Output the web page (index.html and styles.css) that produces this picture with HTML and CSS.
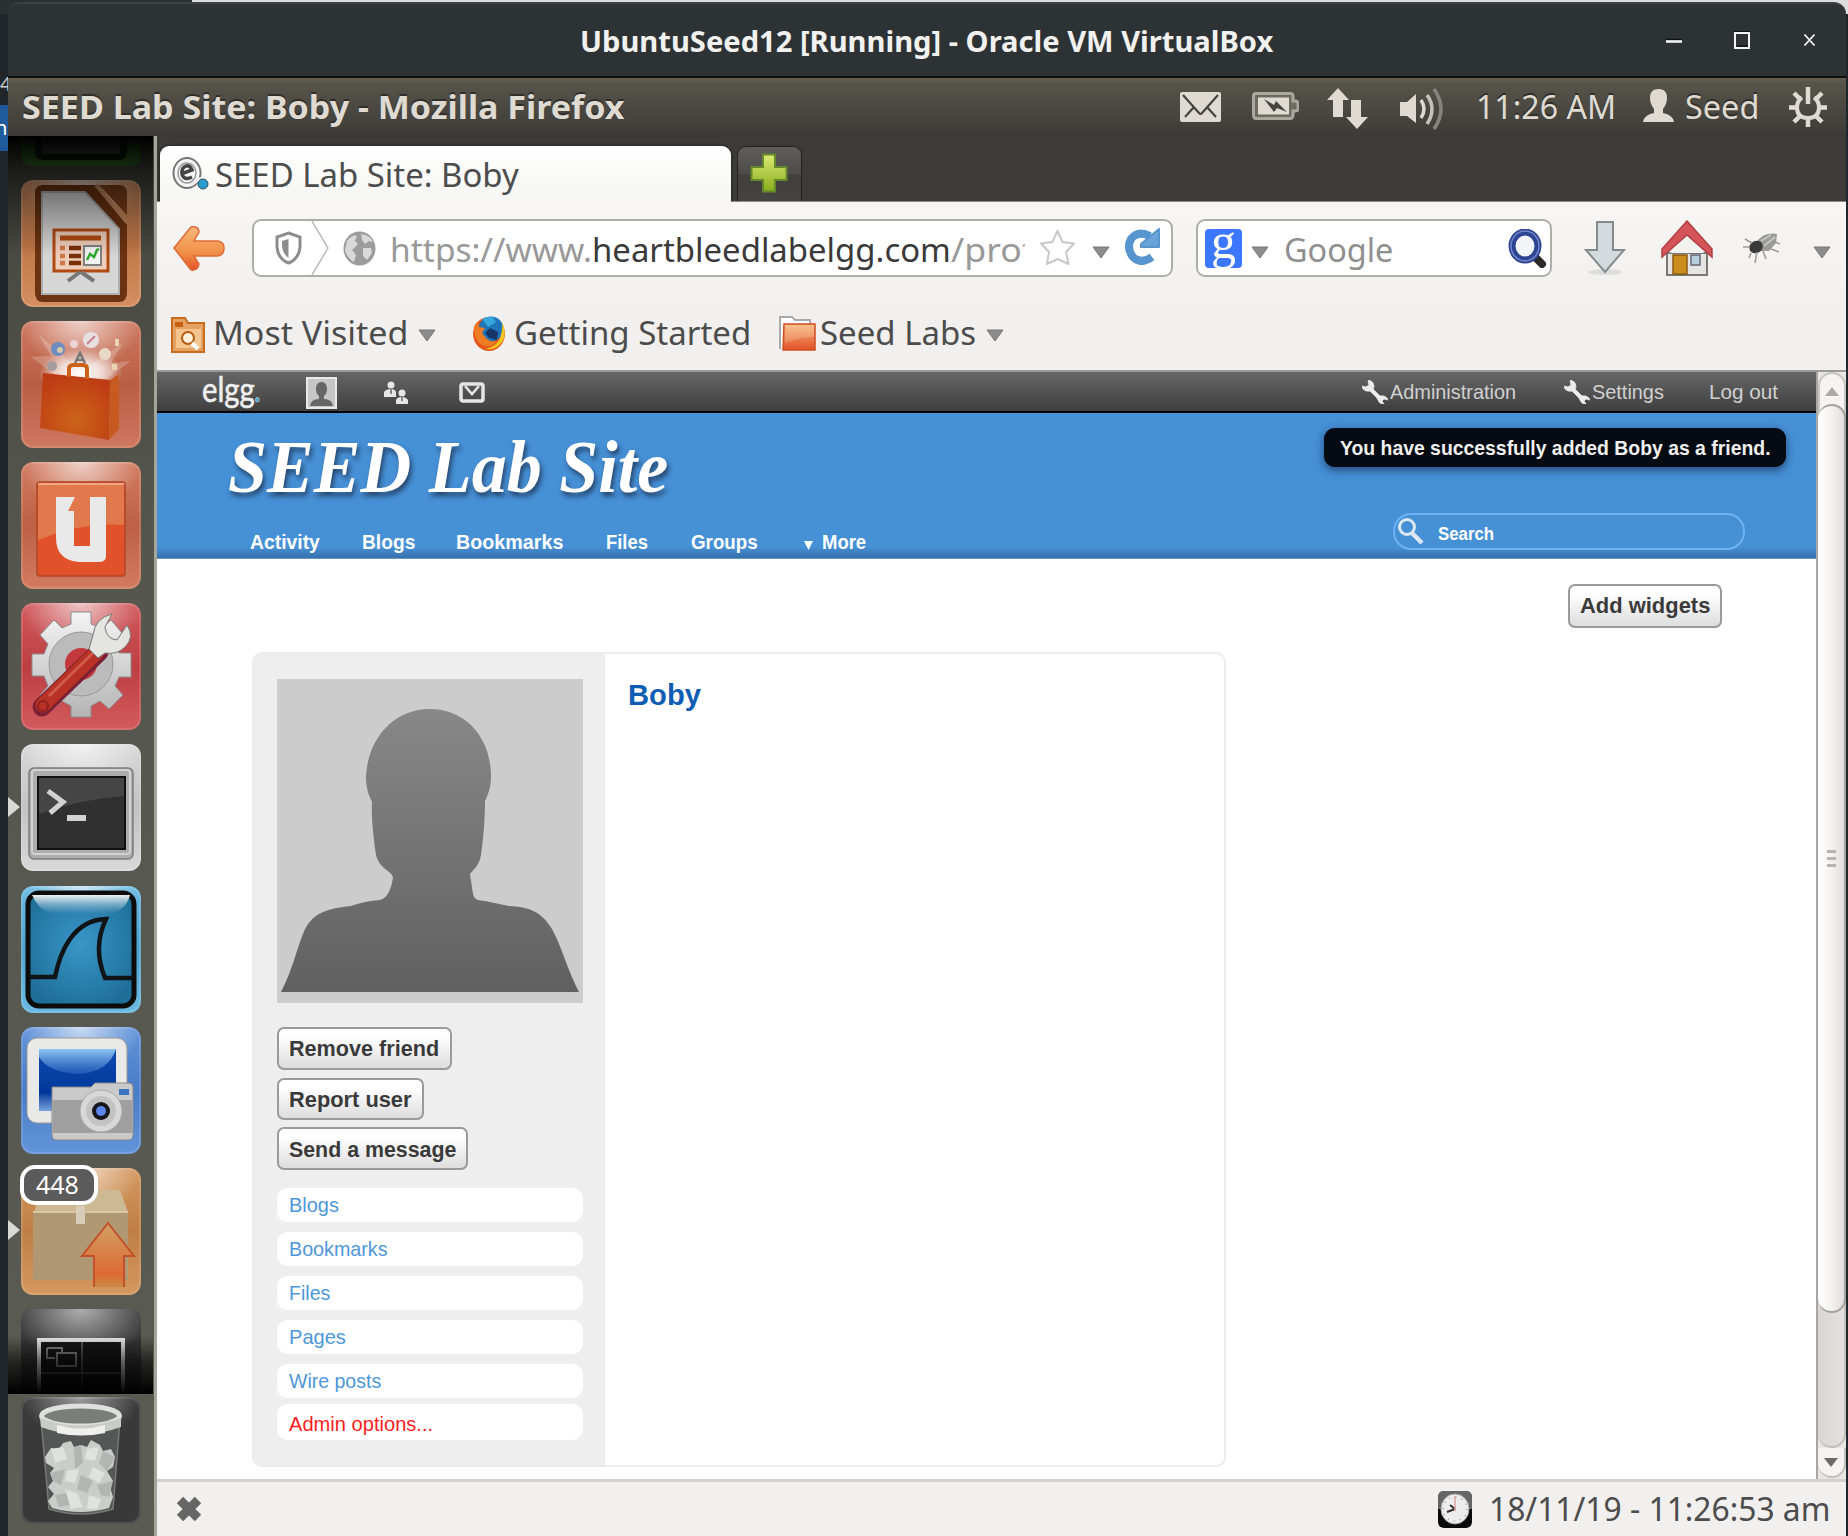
FILE: index.html
```html
<!DOCTYPE html>
<html lang="en">
<head>
<meta charset="utf-8">
<title>UbuntuSeed12 [Running] - Oracle VM VirtualBox</title>
<link rel="stylesheet" href="styles.css">
</head>
<body>
<svg class="defs" width="0" height="0" aria-hidden="true">
  <defs>
    <linearGradient id="gOrange" x1="0" y1="0" x2="0" y2="1"><stop offset="0" stop-color="#f6b573"/><stop offset="1" stop-color="#e2522a"/></linearGradient>
    <linearGradient id="gArrow" x1="0" y1="0" x2="0" y2="1"><stop offset="0" stop-color="#f9b878"/><stop offset=".6" stop-color="#f09048"/><stop offset="1" stop-color="#e2522a"/></linearGradient>
    <linearGradient id="gUp" x1="0" y1="0" x2="0" y2="1"><stop offset="0" stop-color="#cfa062"/><stop offset=".8" stop-color="#de6a34"/><stop offset="1" stop-color="#c98a44"/></linearGradient>
    <radialGradient id="gShine" cx=".5" cy="0" r=".6"><stop offset="0" stop-color="#fff" stop-opacity=".6"/><stop offset="1" stop-color="#fff" stop-opacity="0"/></radialGradient>
    <radialGradient id="gBurst"><stop offset="0" stop-color="#fff"/><stop offset=".5" stop-color="#fff" stop-opacity=".7"/><stop offset="1" stop-color="#fff" stop-opacity="0"/></radialGradient>
    <radialGradient id="gBag" cx=".5" cy=".7" r=".7"><stop offset="0" stop-color="#cc6418"/><stop offset="1" stop-color="#bd3b14"/></radialGradient>
    <radialGradient id="gSea" cx=".5" cy=".45" r=".6"><stop offset="0" stop-color="#3a96c8"/><stop offset="1" stop-color="#1e6f98"/></radialGradient>
    <linearGradient id="gGlass" x1="0" y1="0" x2="0" y2="1"><stop offset="0" stop-color="#f2f2f2"/><stop offset="1" stop-color="#9cc8de" stop-opacity="0"/></linearGradient>
    <linearGradient id="gBody" x1="0" y1="0" x2="0" y2="1"><stop offset="0" stop-color="#888"/><stop offset="1" stop-color="#606060"/></linearGradient>
    <linearGradient id="gSteel" x1="0" y1="0" x2="0" y2="1"><stop offset="0" stop-color="#f4f4f4"/><stop offset="1" stop-color="#b4b4b4"/></linearGradient>
    <linearGradient id="gBlue" x1="0" y1="0" x2="0" y2="1"><stop offset="0" stop-color="#0d4bb0"/><stop offset=".7" stop-color="#02379a"/><stop offset="1" stop-color="#7aa3e0"/></linearGradient>
    <linearGradient id="gSky" x1="0" y1="0" x2="0" y2="1"><stop offset="0" stop-color="#8fc6f4"/><stop offset="1" stop-color="#2f66c0" stop-opacity=".6"/></linearGradient>
    <linearGradient id="gPlus" x1="0" y1="0" x2="0" y2="1"><stop offset="0" stop-color="#dbe973"/><stop offset="1" stop-color="#8aac1d"/></linearGradient>
  </defs>
  <symbol id="caret" viewBox="0 0 18 13"><path d="M1 1H17L9 12Z" fill="#8c8c8c" stroke="#777" stroke-width="1"/></symbol>
  <symbol id="wrench" viewBox="0 0 26 24"><path d="M7 0Q12 2 12 6Q12 8 11 9L18 16Q22 15 25 18L26 20L22 19L20 21L22 24Q17 24 16 20L15 18L8 11Q4 12 1 9L0 6L4 7L7 5L6 1Z" fill="#ececec" stroke="#ececec" stroke-width=".8"/></symbol>
  <symbol id="person" viewBox="0 0 305 323"><path d="M153 30C190 30 214 60 214 97C214 108 211 116 208 122C208 142 206 162 204 176C202 186 199 188 193 195L196 215C198 222 202 221 208 222L232 227C252 228 264 232 275 250C285 268 290 290 302 313H4C16 290 20 268 28 250C37 234 48 230 74 227Q88 222 103 221C112 219 115 206 116 198C114 192 102 189 99 176C97 162 94 140 95 123C91 115 89 108 89 97C91 60 116 30 153 30Z" fill="url(#gBody)"/></symbol>
</svg>

<div class="desktop">
  <div class="behind"><span class="behind-digit">4</span><span class="behind-sel">n</span></div>
  <main class="window">
    <header class="titlebar">
      <h1 class="fit title"><span>UbuntuSeed12 [Running] - Oracle VM VirtualBox</span></h1>
      <div class="wm">
        <svg width="16" height="18"><path d="M0 8.5H16" stroke="#111" stroke-width="1.5"/><path d="M0 10.5H16" stroke="#f4f4f4" stroke-width="2.6"/></svg>
        <svg width="16" height="18"><path d="M0 .5H16M3 15H14" stroke="#111" stroke-width="1.5"/><path d="M1 2H15V17H1Z" fill="none" stroke="#f4f4f4" stroke-width="2"/></svg>
        <svg width="14" height="18"><path d="M2.500 3.500L12.500 14.500M12.500 3.500L2.500 14.500" stroke="#f4f4f4" stroke-width="1.8"/></svg>
      </div>
    </header>

    <div class="panel">
      <strong class="fit app"><span>SEED Lab Site: Boby - Mozilla Firefox</span></strong>
      <svg class="p-mail" width="41" height="31" viewBox="0 0 41 31"><rect width="41" height="30" rx="2" fill="#dfdbd2"/><path d="M3 3L19 21Q20.500 23 22 21L38 3M5 25L14 15M36 25L27 15" fill="none" stroke="#45443e" stroke-width="2.200"/></svg>
      <svg class="p-bat" width="47" height="28" viewBox="0 0 47 28"><path d="M4 1.500H38Q41 1.500 41 4V9H43.500Q46 9 46 12V17Q46 19 43.500 19H41V23Q41 26.500 38 26.500H4Q1.500 26.500 1.500 23V4Q1.500 1.500 4 1.500Z" fill="#6d6a61" stroke="#aaa79e" stroke-width="3"/><path d="M6 5.500H37V22.500H6Z" fill="#dfdbd2"/><path d="M12 7L22 13L24 9L35 20L25 16L22 20Z" fill="#45443e"/></svg>
      <svg class="p-net" width="41" height="42" viewBox="0 0 41 42"><path d="M11 0L22 12H16V29H6V12H0ZM24 12H34V29H41L30 41L19 29H24Z" fill="#dfdbd2"/></svg>
      <svg class="p-vol" width="46" height="42" viewBox="0 0 46 42"><path d="M0 14H7L16 6V35L7 28H0Z" fill="#dfdbd2"/><path d="M21 12Q27 21 21 30" fill="none" stroke="#dfdbd2" stroke-width="3.500"/><path d="M27 7Q37 21 27 36" fill="none" stroke="#c5c2b9" stroke-width="3.500"/><path d="M34 1Q48 21 34 41" fill="none" stroke="#86847c" stroke-width="3.500"/></svg>
      <span class="fit clock"><span>11:26 AM</span></span>
      <svg class="p-user" width="31" height="34" viewBox="0 0 31 34"><path d="M15.500 0C22 0 24 4 24 9C24 14 22 17 20 20V24Q30 26 31 33H0Q1 26 11 24V20C9 17 7 14 7 9C7 4 9 0 15.500 0Z" fill="#dfdbd2"/></svg>
      <span class="fit user"><span>Seed</span></span>
      <svg class="p-gear" width="38" height="40" viewBox="0 0 38 40"><path d="M13 10.500Q8 14 8 20.500Q8 31 19 31Q30 31 30 20.500Q30 14 25 10.500" fill="none" stroke="#dfdbd2" stroke-width="4"/><path d="M19 0V17M0 20.500H7M31 20.500H38M19 32V40M5 6L11 12M33 6L27 12M5 35L11 29M33 35L27 29" stroke="#dfdbd2" stroke-width="4.500"/></svg>
    </div>

    <div class="work">
      <nav class="launcher">
        <div class="tiles">
          <svg width="120" height="29"><path d="M0 0H120V17Q120 29 108 29H12Q0 29 0 17Z" fill="#3b7a2c"/><path d="M14 0H106V15Q106 23 98 23H22Q14 23 14 15Z" fill="#0b200b"/><path d="M21 0H99V17H21Z" fill="#4a4c4a"/></svg>
          <svg class="tile" width="120" height="127" style="--c:#cf7f4c"><path d="M22 5H78L106 45V112Q106 122 98 122H22Q14 122 14 112V13Q14 5 22 5Z" fill="#6b3311"/><path d="M78 5H98Q106 5 106 13V35Z" fill="#7d3f1c"/><path d="M75 5L106 42" stroke="#c2895f" stroke-width="4"/><path d="M21 12H64L98 49V114H21Z" fill="#d6d6d6" stroke="#b0b0b0" stroke-width="2"/><path d="M33 50H87V91H33Z" fill="#efcdbb" stroke="#b14a12" stroke-width="3"/><path d="M39 58H80" stroke="#b14a12" stroke-width="5"/><path d="M39 68H44M39 76H44M39 83H44" stroke="#cc7846" stroke-width="4.500"/><path d="M48 68H60M48 76H60M48 83H60" stroke="#7a2f08" stroke-width="4.500"/><path d="M63 66H80V85H63Z" fill="#f1f1f1" stroke="#7f8080" stroke-width="2"/><path d="M66 80L69 74L73 77L76 70L78 69" fill="none" stroke="#2faa2f" stroke-width="2.500"/><path d="M59 92L47 101M60 92L73 101" stroke="#777" stroke-width="4"/></svg>
          <svg class="tile" width="120" height="127" style="--c:#c8664a"><path d="M60 50L18 14L30 35L10 36L40 58H85L110 40L90 42L102 22Z" fill="#fff" opacity=".22"/><ellipse cx="60" cy="52" rx="42" ry="24" fill="url(#gBurst)"/><circle cx="37" cy="28" r="7" fill="#6a8cc0"/><circle cx="39" cy="29" r="3" fill="#d8c9a8"/><circle cx="70" cy="19" r="8" fill="#e6e0e3"/><path d="M66 23L74 15" stroke="#c5808c" stroke-width="2"/><circle cx="53" cy="23" r="4" fill="#ecd4d4"/><circle cx="84" cy="33" r="6" fill="#ead8c6"/><circle cx="31" cy="45" r="5" fill="#a49c9f"/><path d="M54 42L59 32L64 42M56 39H63" stroke="#777" stroke-width="2.500" fill="none"/><path d="M94 18H98V25H94ZM91 43H96V49H91Z" fill="#e9d5b4"/><path d="M22 52L89 59L88 119L19 107Z" fill="url(#gBag)"/><path d="M89 59L98 53V108L88 119Z" fill="#c65a20"/><path d="M48 56V48Q48 44 52 44H62Q66 44 66 48V58" fill="none" stroke="#cb6218" stroke-width="4"/></svg>
          <svg class="tile" width="120" height="127" style="--c:#cc694b"><rect x="16" y="20" width="88" height="94" rx="3" fill="#e2522a" stroke="#b04628" stroke-width="1.500"/><path d="M17 22H103V63Q60 60 17 78Z" fill="#e2794c"/><path d="M17 22H103" stroke="#f2a883" stroke-width="2"/><path d="M35 35H54L47 49H53V84H69V35H85V94Q85 100 78 100H58Q35 98 35 76Z" fill="#e9e9e9"/></svg>
          <svg class="tile" width="120" height="127" style="--c:#cc4448"><g fill="url(#gSteel)" stroke="#8d8d8d" stroke-width="1"><path d="M50 9H70V21L81 25L90 17L101 30L95 41L98 50H110V74H98L94 83L102 92L88 106L79 98L70 103V114H50V103L41 98L32 106L19 92L27 83L23 73H11V51H23L27 41L19 32L33 17L41 25L50 21Z"/></g><circle cx="60" cy="61" r="32" fill="#bbb" stroke="#999"/><circle cx="60" cy="61" r="16" fill="#c2383c"/><path d="M21 104L78 49" stroke="#7b1f33" stroke-width="19" stroke-linecap="round"/><path d="M22 102L77 48" stroke="#b93226" stroke-width="15" stroke-linecap="round"/><path d="M28 93L72 50" stroke="#cf5c48" stroke-width="3"/><circle cx="22" cy="103" r="5" fill="none" stroke="#8f2020" stroke-width="2"/><path d="M68 46L72 32Q74 15 91 11L84 24Q85 36 96 37L106 22Q114 34 104 44Q96 52 84 50L77 55Z" fill="#e4e4e0" stroke="#777"/></svg>
          <svg class="tile" width="120" height="127" style="--c:#d3d3d3"><rect x="8" y="24" width="104" height="91" rx="5" fill="#adadad" stroke="#7d7d7d" stroke-width="1.500"/><rect x="11" y="26" width="98" height="84" rx="3" fill="none" stroke="#d2d2d2" stroke-width="2"/><rect x="17" y="33" width="87" height="72" fill="#303030" stroke="#111" stroke-width="2"/><path d="M18 34H103V52Q60 55 18 70Z" fill="#5a5a5a" opacity=".5"/><path d="M27 47L42 58L29 69" fill="none" stroke="#d2d2d2" stroke-width="5"/><path d="M46 74H65" stroke="#d2d2d2" stroke-width="6"/></svg>
          <svg class="tile" width="120" height="127" style="--c:#55b0de"><rect x="7" y="7" width="106" height="113" rx="11" fill="url(#gSea)" stroke="#0c0c0c" stroke-width="5"/><path d="M11 9H109Q105 24 90 28H30Q17 23 11 9Z" fill="url(#gGlass)"/><path d="M8 91H34C39 66 52 34 85 33C74 56 77 75 84 92H112" fill="none" stroke="#111417" stroke-width="4.500"/></svg>
          <svg class="tile" width="120" height="127" style="--c:#4e86d6"><rect x="6" y="11" width="100" height="85" rx="10" fill="#e9e9e7" stroke="#999"/><rect x="18" y="22" width="77" height="62" fill="url(#gBlue)"/><path d="M18 22H95Q88 45 57 47Q27 45 18 30Z" fill="url(#gSky)"/><path d="M31 60H70L74 56H108Q112 56 112 60V108Q112 113 107 113H35Q31 113 31 109Z" fill="#c9c9c9" stroke="#888"/><path d="M32 73H111V106H32Z" fill="#9f9f9f"/><path d="M98 62H108V68H98Z" fill="#3b74c0"/><circle cx="80" cy="84" r="21" fill="#d8d8d8" stroke="#aaa"/><circle cx="80" cy="84" r="15" fill="#c2c2c2"/><circle cx="80" cy="84" r="9" fill="#15161c"/><circle cx="80" cy="84" r="5" fill="#5c86ea"/></svg>
          <svg class="tile" width="120" height="127" style="--c:#cf8a4a"><path d="M13 44L21 22H99L107 44Z" fill="#cdb994"/><path d="M12 44H107V112H12Z" fill="#b09872"/><path d="M12 44H107" stroke="#d9c8a5" stroke-width="2"/><path d="M55 38H64V56H55Z" fill="#d7ccb8"/><path d="M87 55L113 88H103V119H73V88H61Z" fill="url(#gUp)"/><path d="M73 119V88H61L87 55L113 88H103V119" fill="none" stroke="#c4502a" stroke-width="2"/></svg>
          <svg width="120" height="85"><path d="M0 85V12Q0 0 12 0H108Q120 0 120 12V85Z" fill="#363636"/><path d="M0 85V12Q0 0 12 0H108Q120 0 120 12V85Z" fill="url(#gShine)"/><path d="M18 85V31H102V85" fill="#171717" stroke="#e8e8e8" stroke-width="4"/><path d="M61 33V85M20 64H100" stroke="#555" stroke-width="2"/><path d="M26 39H41V44M26 39V49H34M36 44H55V57H36Z" fill="none" stroke="#888" stroke-width="2"/></svg>
        </div>
        <svg class="tile trash" width="120" height="127" style="--c:#393939"><path d="M20 22L28 112Q60 122 92 112L99 22Z" fill="#5d5f5e" opacity=".8" stroke="#8a8c8a" stroke-width="1.500"/><path d="M24 60L30 51L38 52L42 46L50 44L53 50L60 48L66 50L70 43L79 48L82 54L90 52L94 60L92 70L86 74L92 84L89 90L92 100L88 111Q60 119 31 111L27 104L33 97L27 90L32 84L29 76L33 71L25 66Z" fill="#cbcdca"/><path d="M53 50L60 48L62 66L54 72ZM82 54L94 60L86 74L78 66ZM30 76L44 72L40 88L32 84ZM60 78L72 84L66 96L56 92ZM76 88L92 84L88 100L80 98ZM34 98L46 96L50 108L38 110Z" fill="#b2b5b0"/><path d="M30 52L42 50L46 62L34 66ZM66 52L78 50L74 64L64 62ZM46 74L58 72L54 86L44 84ZM72 70L84 76L78 86L68 80ZM44 92L56 96L62 110L50 112ZM68 98L80 102L76 112L66 112Z" fill="#e0e2df"/><ellipse cx="59.500" cy="19" rx="39" ry="10" fill="#7b7d7b" stroke="#dfe1de" stroke-width="5"/><path d="M19 21Q59 36 100 21V30Q59 45 20 30Z" fill="#c9cbc8"/><path d="M36 28Q60 35 84 28V36Q60 41 36 36Z" fill="#efefee"/></svg>
        <div class="fade-top"></div><div class="fade-bottom"></div>
        <svg class="run run-term" width="12" height="20"><path d="M0 0L12 10L0 20Z" fill="#d8d8d6"/></svg>
        <svg class="run run-upd" width="12" height="20"><path d="M0 0L12 10L0 20Z" fill="#d8d8d6"/></svg>
        <span class="badge"><span class="fit count"><span>448</span></span></span>
      </nav>

      <section class="browser">
        <div class="tabs">
          <div class="tab">
            <svg width="38" height="37" viewBox="0 0 38 37"><ellipse cx="16" cy="17" rx="13.500" ry="15" fill="#f6f6f6" stroke="#777" stroke-width="2"/><ellipse cx="16" cy="17" rx="9" ry="10" fill="none" stroke="#999" stroke-width="1.500"/><path d="M10 18L21 14Q19 9 15 10Q10 12 11 18Q13 25 21 21" fill="none" stroke="#444" stroke-width="3.500"/><path d="M20 29L30 22" stroke="#eee" stroke-width="3"/><circle cx="32" cy="28" r="5" fill="#2a9bd0" stroke="#355" stroke-width="1"/></svg>
            <span class="fit tabname"><span>SEED Lab Site: Boby</span></span>
          </div>
          <div class="newtab"><svg width="38" height="40" viewBox="0 0 38 40"><path d="M13 1.500H25V14H36.500V27H25V38.500H13V27H1.500V14H13Z" fill="url(#gPlus)" stroke="#66892b" stroke-width="2"/></svg></div>
        </div>
        <div class="toolbars">
          <div class="navrow">
            <svg class="back" width="52" height="45" viewBox="0 0 52 45"><path d="M1 22L18 1Q26 0 26 6L21 15H45Q51 16 51 22Q51 29 45 30H21L26 38Q25 45 18 44Z" fill="url(#gArrow)" stroke="#df6b38" stroke-width="1.500"/></svg>
            <div class="urlbar">
              <svg class="shield" width="27" height="34" viewBox="0 0 27 34"><path d="M13.500 2L25 6V16Q24 28 13.500 32Q3 28 2 16V6Z" fill="#fff" stroke="#8d8d8d" stroke-width="3"/><path d="M13.500 8V27Q8 23 7 16V10Z" fill="#8d8d8d"/></svg>
              <svg class="chev" width="19" height="54" viewBox="0 0 19 54"><path d="M1 0L17 27L1 54" fill="none" stroke="#bbb" stroke-width="1.500"/></svg>
              <svg class="globe" width="33" height="35" viewBox="0 0 33 35"><ellipse cx="16.500" cy="17.500" rx="16" ry="17" fill="#9c9c9c"/><path d="M4 10Q10 3 14 5L12 10L15 13L9 19L13 24L11 31Q4 27 2 19ZM18 3Q27 4 30 11L26 10L22 13L19 9ZM20 17L28 17L29 22L24 29L20 25Z" fill="#d9d9d9"/></svg>
              <div class="url"><span class="fit u1"><span>https://www.</span></span><span class="fit u2"><span>heartbleedlabelgg.com</span></span><span class="fit u3"><span>/profile</span></span></div>
              <svg class="star" width="37" height="38" viewBox="0 0 37 38"><path d="M18.500 2L23.500 13L35 14.500L27 23L29.500 35L18.500 30L8 35L10 23L2 14.500L13.500 13Z" fill="#fff" stroke="#c8c8c8" stroke-width="2" stroke-linejoin="round"/></svg>
              <svg class="c1" width="18" height="13"><use href="#caret"/></svg>
              <svg class="reload" width="36" height="37" viewBox="0 0 36 37"><path d="M28 29Q17 37 9 29Q2 20 7 11Q14 2 26 8" fill="none" stroke="#5795cf" stroke-width="8"/><path d="M35 1V19H17V16Z" fill="#6ba3d6" stroke="#5795cf" stroke-linejoin="round" stroke-width="2"/></svg>
            </div>
            <div class="searchbar">
              <span class="gicon">g</span>
              <svg class="c2" width="18" height="13"><use href="#caret"/></svg>
              <span class="fit goog"><span>Google</span></span>
              <svg class="mag" width="39" height="39" viewBox="0 0 39 39"><path d="M26 27L34 35" stroke="#2c2a28" stroke-width="8" stroke-linecap="round"/><ellipse cx="17" cy="17" rx="13" ry="14" fill="#f2f4f8" stroke="#2d4493" stroke-width="7"/><ellipse cx="17" cy="17" rx="14" ry="15" fill="none" stroke="#7387c8" stroke-width="1.500"/></svg>
            </div>
            <svg class="dl" width="42" height="56" viewBox="0 0 42 56"><ellipse cx="21" cy="52" rx="17" ry="3" fill="#ddd"/><path d="M13 2H29V30H40L21 52L2 30H13Z" fill="#d3dbde" stroke="#858b8c" stroke-width="2"/></svg>
            <svg class="home" width="52" height="57" viewBox="0 0 52 57"><path d="M6 33H46V55H6Z" fill="#e5e4e2" stroke="#777" stroke-width="2"/><path d="M9 33L26 17L43 33Z" fill="#f2f2f1"/><path d="M26 1L51 29V37L26 15L1 37V29Z" fill="#d4545a" stroke="#b13f40" stroke-width="1.500"/><path d="M12 35H26V54H12Z" fill="#cc8c1e" stroke="#8a5a10" stroke-width="1.500"/><path d="M30 35H39V45H30Z" fill="#b5d0dc" stroke="#667" stroke-width="1.500"/></svg>
            <svg class="fly" width="37" height="32" viewBox="0 0 37 32"><path d="M15 8Q22 0 34 2L33 11L26 19L16 19Z" fill="#8a8a8a" opacity=".85"/><ellipse cx="13" cy="15" rx="7" ry="6" transform="rotate(-30 13 15)" fill="#3a3a3a"/><path d="M0 15H7M2 7L9 11M8 21L6 26M14 20L12 31M20 19L23 27M28 17L36 20M32 10L37 12" stroke="#999" stroke-width="1.500"/><path d="M21 14L32 5M18 9L28 3" stroke="#c4c4c4" stroke-width="2"/></svg>
            <svg class="c3" width="18" height="13"><use href="#caret"/></svg>
          </div>
          <div class="bookmarks">
            <svg class="bmv" width="35" height="37" viewBox="0 0 35 37"><path d="M1 36V2H14L17 7H33V36Z" fill="#e3a163" stroke="#c96b1d" stroke-width="2"/><path d="M4 6H12V11H4Z" fill="#c4620f"/><path d="M5 13H30V32H5Z" fill="#f4c58e"/><circle cx="17" cy="22" r="6" fill="#fff1dd" stroke="#b65a10" stroke-width="2"/><path d="M21 27L27 33" stroke="#fff" stroke-width="4"/></svg>
            <span class="fit b1"><span>Most Visited</span></span>
            <svg class="cb1" width="18" height="13"><use href="#caret"/></svg>
            <svg class="bff" width="33" height="36" viewBox="0 0 33 36"><ellipse cx="16" cy="18" rx="16" ry="17" fill="#e4571b"/><ellipse cx="18" cy="13" rx="12.500" ry="12.500" fill="#1f74b8"/><path d="M9 3Q15 0 20 1L23 6L15 11Z" fill="#35a7dc"/><path d="M17 12L25 16L24 24L16 22L12 17Z" fill="#173567"/><path d="M29 6Q34 16 30 25Q23 35 13 33Q24 30 27 22Q30 14 29 6Z" fill="#f7c321"/><path d="M1 10L4 6L6 11L12 12L9 17L14 23Q19 27 24 25Q18 33 9 29Q0 23 1 10Z" fill="#ee7a22"/></svg>
            <span class="fit b2"><span>Getting Started</span></span>
            <svg class="bfo" width="37" height="37" viewBox="0 0 37 37"><path d="M1 34V2H13L16 5H31V12" fill="#fff" stroke="#aaa" stroke-width="2"/><path d="M5 9H36V35H4Z" fill="url(#gOrange)" stroke="#cf4f22" stroke-width="1.500"/><path d="M6 10H35V22Q20 22 6 28Z" fill="#fff" opacity=".18"/></svg>
            <span class="fit b3"><span>Seed Labs</span></span>
            <svg class="cb1" width="18" height="13"><use href="#caret"/></svg>
          </div>
        </div>

        <div class="viewport">
          <div class="page">
            <div class="elggbar">
              <span class="fit logo"><span>elgg<i>.</i></span></span>
              <svg class="e-av" width="31" height="32" viewBox="0 0 31 32"><rect x="1" y="1" width="29" height="30" fill="#c6c6c6" stroke="#e9e9e9" stroke-width="2"/><path d="M15.500 5C20 5 21 9 21 12Q21 17 18 19V22Q26 22 27 29H4Q5 22 13 22V19Q10 17 10 12C10 9 11 5 15.500 5Z" fill="#666"/></svg>
              <svg class="e-fr" width="24" height="24" viewBox="0 0 24 24"><circle cx="7" cy="4" r="3.500" fill="#e6e6e6"/><path d="M0 16V11Q2 8 7 8Q11 8 12 11V16Z" fill="#e6e6e6"/><circle cx="18" cy="12" r="3.500" fill="#e6e6e6"/><path d="M12 23V19Q13 16 18 16Q22 16 24 19V23Z" fill="#e6e6e6"/><path d="M7 8V13M18 16V20" stroke="#666" stroke-width="1.500"/></svg>
              <svg class="e-ma" width="26" height="21" viewBox="0 0 26 21"><rect x="2" y="2" width="22" height="17" rx="2" fill="none" stroke="#e6e6e6" stroke-width="3.500"/><path d="M6 4L13 12L20 4" fill="none" stroke="#e6e6e6" stroke-width="2.500"/></svg>
              <svg class="e-w1" width="26" height="24"><use href="#wrench"/></svg><span class="fit e1"><span>Administration</span></span>
              <svg class="e-w2" width="26" height="24"><use href="#wrench"/></svg><span class="fit e2"><span>Settings</span></span>
              <span class="fit e3"><span>Log out</span></span>
            </div>
            <div class="hero">
              <div class="hero-top">
                <h2 class="fit site"><span>SEED Lab Site</span></h2>
                <div class="message"><span class="fit msg"><span>You have successfully added Boby as a friend.</span></span></div>
              </div>
              <div class="hero-bottom">
                <span class="fit n1"><span>Activity</span></span>
                <span class="fit n2"><span>Blogs</span></span>
                <span class="fit n3"><span>Bookmarks</span></span>
                <span class="fit n4"><span>Files</span></span>
                <span class="fit n5"><span>Groups</span></span>
                <svg class="n-tri" width="9" height="10"><path d="M0 1H9L4.500 10Z" fill="#fff"/></svg>
                <span class="fit n6"><span>More</span></span>
                <div class="find"><svg width="27" height="27" viewBox="0 0 27 27"><circle cx="10" cy="9" r="7.500" fill="none" stroke="#dce8f3" stroke-width="3"/><path d="M15 15L25 25" stroke="#dce8f3" stroke-width="4.500"/></svg><span class="fit srch"><span>Search</span></span></div>
              </div>
            </div>
            <div class="actions"><a class="btn addw"><span class="fit aw"><span>Add widgets</span></span></a></div>
            <div class="profile">
              <aside class="side">
                <div class="avatar"><svg width="305" height="323"><use href="#person"/></svg></div>
                <a class="btn rf"><span class="fit t1"><span>Remove friend</span></span></a>
                <a class="btn ru"><span class="fit t2"><span>Report user</span></span></a>
                <a class="btn sm"><span class="fit t3"><span>Send a message</span></span></a>
                <ul class="links">
                  <li><span class="fit l1"><span>Blogs</span></span></li>
                  <li><span class="fit l2"><span>Bookmarks</span></span></li>
                  <li><span class="fit l3"><span>Files</span></span></li>
                  <li><span class="fit l4"><span>Pages</span></span></li>
                  <li><span class="fit l5"><span>Wire posts</span></span></li>
                  <li class="admin"><span class="fit l6"><span>Admin options...</span></span></li>
                </ul>
              </aside>
              <h3 class="fit name"><span>Boby</span></h3>
            </div>
          </div>
          <div class="scroll">
            <div class="s-up"><svg width="14" height="9"><path d="M0 9H14L7 0Z" fill="#aaa"/></svg></div>
            <div class="s-thumb"><i></i><i></i><i></i></div>
            <div class="s-trough"></div>
            <div class="s-down"><svg width="14" height="9"><path d="M0 0H14L7 9Z" fill="#6a6a6a"/></svg></div>
          </div>
        </div>

        <footer class="status">
          <svg width="28" height="26" viewBox="0 0 28 26"><path d="M5 4L23 22M23 4L5 22" stroke="#666" stroke-width="9"/></svg>
          <svg class="s-clock" width="34" height="37" viewBox="0 0 34 37"><rect width="34" height="37" rx="6" fill="#0a0a0a"/><path d="M0 18V6Q0 0 6 0H28Q34 0 34 6V18Z" fill="#666"/><ellipse cx="17" cy="18" rx="14" ry="15" fill="#ededed" stroke="#aaa"/><path d="M17 18L9 21M17 18L12 14" stroke="#333" stroke-width="2"/><path d="M17 20V5" stroke="#dfa0a0" stroke-width="1.500"/><circle cx="17" cy="18" r="12" fill="none" stroke="#999" stroke-width="1.500" stroke-dasharray="1 5.300"/></svg>
          <span class="fit date"><span>18/11/19 - 11:26:53 am</span></span>
        </footer>
      </section>
    </div>
  </main>
</div>
</body>
</html>
```
FILE: styles.css
```css
* { box-sizing: border-box; }
html, body { margin: 0; height: 1536px; overflow: hidden; }
svg { display: block; flex: none; }
.defs { position: absolute; }
h1, h2, h3, ul { margin: 0; padding: 0; font-weight: bold; list-style: none; }

.desktop {
  display: flex;
  width: 1848px;
  height: 1536px;
  padding: 2px 2px 0 0;
  background: linear-gradient(90deg, #2a2f31 192px, #dcdddc 192px) 0 0 / 100% 14px no-repeat, #20262a;
  font-family: "Noto Sans", "Open Sans", sans-serif;
}
.behind { width: 8px; overflow: hidden; color: #ccc; font-size: 20px; padding-top: 68px; }
.behind-digit { display: block; line-height: 28px; }
.behind-sel { display: block; margin-top: 7px; height: 46px; line-height: 46px; background: #1f5a9c; color: #fff; text-indent: -5px; }
.window { width: 1838px; height: 1534px; display: flex; flex-direction: column; }

/* each label fills a slot --w wide; --k is its horizontal scale */
.fit { display: block; flex: none; width: var(--w); white-space: nowrap; }
.fit > span { display: inline-block; transform: scaleX(var(--k, 1)); transform-origin: 0 50%; }

.titlebar {
  height: 76px;
  border-radius: 12px 12px 0 0;
  border-top: 2px solid #3b4144;
  border-bottom: 2px solid #0e0f0f;
  background: #2d3235;
  display: flex;
  align-items: center;
  padding-left: 572px;
}
.title { --w: 694px; --k: 1.04; margin-top: 2px; font-size: 28px; line-height: 40px; color: #f1f1ef; }
.wm { display: flex; gap: 52px; margin-left: 392px; }

.panel {
  height: 58px;
  background: linear-gradient(#65614f 0, #57544a 5px, #3c3b37);
  display: flex;
  align-items: center;
  padding-bottom: 1px;
  font-size: 32px;
  line-height: 48px;
  color: #dfdbd2;
}
.app { --w: 602px; --k: 1.064; margin-left: 14px; text-shadow: 0 -2px #2f2e2a; }
.p-mail { margin-left: 556px; margin-top: 2px; }
.p-bat { margin-left: 31px; margin-top: -2px; }
.p-net { margin-left: 28px; margin-top: 4px; }
.p-vol { margin-left: 32px; margin-top: 4px; }
.clock { --w: 139px; --k: 1.003; margin-left: 30px; text-shadow: 0 -2px #2f2e2a; }
.p-user { margin-left: 28px; margin-top: -1px; }
.user { --w: 74px; --k: 1.014; margin-left: 11px; text-shadow: 0 -2px #2f2e2a; }
.p-gear { margin-left: 30px; margin-top: 1px; }

.work { flex: 1; display: flex; min-height: 0; }

.launcher {
  position: relative;
  width: 149px;
  padding-left: 13px;
  border-right: 3px solid #a5a69b;
  background: linear-gradient(#45463f, #55564d 30%, #5a5b52);
}
.tiles { height: 1258px; padding-top: 1px; display: flex; flex-direction: column; gap: 14.1px; overflow: hidden; }
.tile {
  border-radius: 12px;
  background:
    radial-gradient(ellipse 60px 50px at 50% 0, rgba(255,255,255,.65), rgba(255,255,255,0)),
    linear-gradient(rgba(255,255,255,.12), rgba(0,0,0,.08) 50%, rgba(255,255,255,.12)),
    var(--c);
  box-shadow: inset 0 0 0 2px rgba(255,255,255,.12);
}
.trash { margin-top: 3px; background: radial-gradient(ellipse 60px 40px at 50% 0, rgba(255,255,255,.5), rgba(255,255,255,0)), var(--c); }
.fade-top { position: absolute; left: 0; top: 0; width: 145px; height: 120px; background: linear-gradient(#000, rgba(0,0,0,.6) 30%, rgba(0,0,0,0)); }
.fade-bottom { position: absolute; left: 0; top: 1200px; width: 145px; height: 58px; background: linear-gradient(rgba(0,0,0,0), rgba(0,0,0,.6) 45%, #000); }
.run { position: absolute; left: 0; }
.run-term { top: 661px; }
.run-upd { top: 1084px; }
.badge {
  position: absolute; left: 12px; top: 1029px; width: 78px; height: 40px;
  border: 4px solid #fff; border-radius: 15px; background: #5b5b5b;
  color: #fff; font-size: 25px; line-height: 31px; padding-left: 12px;
}
.count { --w: 43px; }

.browser { flex: 1; min-width: 0; display: flex; flex-direction: column; }
.tabs { height: 66px; background: #3c3b37; display: flex; align-items: flex-end; padding-left: 3px; border-bottom: 1px solid #8b8985; }
.tab {
  width: 571px; height: 56px; margin-bottom: -1px; padding-left: 11px;
  display: flex; align-items: center;
  border-radius: 9px 9px 0 0; background: linear-gradient(#fff, #f5f5f3); box-shadow: 0 0 3px #111;
}
.tabname { --w: 304px; --k: .997; margin: 2px 0 0 6px; font-size: 33px; line-height: 50px; color: #4c4c4c; }
.newtab {
  width: 65px; height: 55px; margin-left: 6px; display: flex; justify-content: center; padding: 6px 2px 0 0;
  border-radius: 9px 9px 0 0; border: 1px solid #22221f; border-bottom: 0;
  background: linear-gradient(#5f5e5b, #4c4b48 50%, #413f3c 52%, #454441);
}

.toolbars { height: 168px; background: linear-gradient(#f7f6f5, #f1f0ee 60%); font-size: 33px; line-height: 50px; color: #4c4c4c; }
.navrow { height: 92px; display: flex; align-items: center; }
.back { margin-left: 16px; }
.urlbar, .searchbar { height: 58px; border: 2px solid #b0aca6; border-radius: 9px; background: #fff; display: flex; align-items: center; }
.urlbar { width: 921px; margin-left: 27px; }
.shield { margin-left: 21px; }
.chev { margin-left: 9px; }
.globe { margin-left: 13px; }
.url { width: 635px; margin-left: 14px; margin-top: 3px; display: flex; overflow: hidden; color: #999; }
.u1 { --w: 202px; --k: 1.015; }
.u2 { --w: 359px; --k: .997; color: #3a3a3a; }
.u3 { --w: 129px; --k: 1.08; }
.star { margin-left: 14px; }
.c1 { margin-left: 16px; margin-top: 8px; }
.reload { margin-left: 14px; margin-top: -3px; }
.searchbar { width: 356px; margin-left: 23px; }
.gicon { width: 37px; height: 39px; margin-left: 7px; border-radius: 4px; background: #3b78ff; color: #fff; text-align: center; font: 50px/25px "Liberation Serif", serif; }
.c2 { margin-left: 9px; margin-top: 8px; }
.goog { --w: 109px; --k: .982; margin-left: 15px; margin-top: 3px; color: #8f8f8f; }
.mag { margin-left: 115px; }
.dl { margin-left: 32px; }
.home { margin-left: 35px; }
.fly { margin-left: 30px; }
.c3 { margin-left: 33px; margin-top: 8px; }
.bookmarks { height: 76px; padding-top: 2px; display: flex; align-items: center; }
.bmv { margin-left: 14px; margin-top: 2px; }
.b1 { --w: 194px; --k: 1.03; margin-left: 7px; }
.cb1 { margin-left: 11px; margin-top: 4px; }
.bff { margin-left: 37px; margin-top: 1px; }
.b2 { --w: 236px; --k: 1; margin-left: 8px; }
.bfo { margin-left: 29px; margin-top: 1px; }
.b3 { --w: 155px; --k: 1; margin-left: 4px; }

.viewport { height: 1109px; display: flex; border-top: 2px solid #9a9a98; background: #fff; font-family: "Liberation Sans", Arial, sans-serif; }
.page { width: 1659px; }
.elggbar { height: 41px; display: flex; align-items: center; background: linear-gradient(#666, #3f3f3f); border-bottom: 2px solid #000; font-size: 21px; line-height: 32px; color: #d0d0d0; }
.logo { --w: 58px; --k: .86; margin-left: 45px; margin-top: -5px; font: 34px/36px Lato, sans-serif; color: #eee; -webkit-text-stroke: .6px #eee; }
.logo i { color: #2a9bd0; }
.e-av { margin-left: 46px; margin-top: 2px; }
.e-fr { margin-left: 47px; margin-top: 2px; }
.e-ma { margin-left: 51px; margin-top: 1px; }
.e-w1 { margin-left: 877px; }
.e1 { --w: 126px; --k: .947; margin-left: 2px; margin-top: 1px; }
.e-w2 { margin-left: 48px; }
.e2 { --w: 72px; --k: .947; margin-left: 2px; margin-top: 1px; }
.e3 { --w: 69px; --k: .986; margin-left: 45px; margin-top: 1px; }

.hero { height: 146px; background: linear-gradient(#4690d6 134px, #3671ab 145px, #9dbfe0 146px); }
.hero-top { height: 97px; display: flex; align-items: flex-start; }
.site { --w: 440px; --k: .961; margin: 15px 0 0 71px; font: italic bold 73px/80px "Liberation Serif", "Times New Roman", serif; color: #fff; text-shadow: 2px 4px 5px rgba(30,50,80,.8); }
.message { width: 462px; height: 39px; margin: 15px 0 0 656px; padding-left: 16px; border-radius: 11px; background: #050b12; box-shadow: 0 3px 9px rgba(20,40,80,.7); }
.msg { --w: 430px; --k: .923; font-weight: bold; font-size: 21px; line-height: 39px; color: #f0f0f0; }
.hero-bottom { display: flex; align-items: flex-end; height: 44px; color: #fff; font-weight: bold; font-size: 21px; line-height: 24px; }
.n1 { --w: 70px; --k: .921; margin-left: 93px; }
.n2 { --w: 53px; --k: .914; margin-left: 42px; }
.n3 { --w: 107px; --k: .939; margin-left: 41px; }
.n4 { --w: 42px; --k: .875; margin-left: 43px; }
.n5 { --w: 67px; --k: .893; margin-left: 43px; }
.n-tri { margin: 0 0 4px 46px; }
.n6 { --w: 44px; --k: .88; margin-left: 9px; }
.find { width: 352px; height: 37px; margin: 0 0 4px 527px; border: 2px solid #6db3f2; border-radius: 18px; display: flex; align-items: center; padding-left: 2px; }
.srch { --w: 56px; --k: .933; margin-left: 14px; margin-top: 4px; font-size: 18px; }

.btn {
  display: block; height: 43px; padding-left: 10px; border: 2px solid #9a9a9a; border-radius: 7px;
  background: linear-gradient(#fff 20%, #ddd); color: #3a3a3a; font-weight: bold; font-size: 21.5px; line-height: 41px;
}
.actions { height: 93px; padding: 25px 94px 0 0; display: flex; justify-content: flex-end; }
.addw { width: 154px; height: 44px; }
.aw { --w: 130px; --k: 1.02; }
.profile { width: 974px; height: 815px; margin-left: 95px; display: flex; border: 2px solid #ececec; border-radius: 10px; overflow: hidden; }
.side { width: 351px; padding: 25px 0 0 23px; background: #eee; }
.avatar { width: 306px; height: 324px; margin-bottom: 24px; background: #ccc; }
.rf { width: 175px; }
.t1 { --w: 149px; --k: 1.005; }
.ru { width: 147px; height: 42px; margin-top: 8px; line-height: 40px; }
.t2 { --w: 122px; --k: 1.015; }
.sm { width: 191px; margin-top: 7px; line-height: 43px; }
.t3 { --w: 167px; --k: .993; }
.links { margin-top: 18px; width: 306px; font-weight: normal; font-size: 21px; color: #4d97da; }
.links li { height: 34px; margin-bottom: 9.9px; padding-left: 12px; border-radius: 11px; background: #fff; line-height: 34px; }
.links .admin { height: 36px; margin-top: -3px; line-height: 39px; color: #ff1d1d; }
.l1 { --w: 50px; --k: .95; }
.l2 { --w: 98px; --k: .938; }
.l3 { --w: 41px; --k: .932; }
.l4 { --w: 57px; --k: .955; }
.l5 { --w: 92px; --k: .929; }
.l6 { --w: 144px; --k: .957; }
.name { --w: 73px; --k: .973; margin: 21px 0 0 23px; font-size: 30px; line-height: 40px; color: #0f5cb3; }

.scroll { width: 30px; display: flex; flex-direction: column; border-left: 2px solid #aaa6a1; background: #e9e7e4; }
.s-up { height: 46px; margin-bottom: -14px; border-radius: 14px 14px 0 0; border: 2px solid #c9c5c0; background: #f5f4f3; display: flex; justify-content: center; padding-top: 13px; }
.s-thumb { position: relative; height: 909px; border: 2px solid #a5a19c; border-left: 0; border-radius: 14px; background: linear-gradient(90deg, #fff, #f4f3f2 50%, #dfdedc); display: flex; flex-direction: column; align-items: center; justify-content: center; gap: 4px; }
.s-thumb i { width: 9px; height: 3px; background: #b5b3b0; }
.s-trough { height: 149px; margin-top: -14px; border-right: 2px solid #c3c0bb; border-bottom: 2px solid #c3c0bb; border-radius: 0 0 14px 14px; background: linear-gradient(90deg, #dad6d3, #e2e1df); }
.s-down { height: 30px; border: 2px solid #c3c0bb; border-top: 0; border-left: 0; border-radius: 0 0 14px 14px; background: #f5f4f3; display: flex; justify-content: center; padding-top: 10px; }

.status { height: 57px; border-top: 3px solid #d3d1cf; background: #f1f0ee; display: flex; align-items: center; padding-left: 18px; font-size: 33px; line-height: 50px; color: #4c4c4c; }
.s-clock { margin-left: 1235px; }
.date { --w: 340px; --k: .963; margin-left: 17px; }
```
